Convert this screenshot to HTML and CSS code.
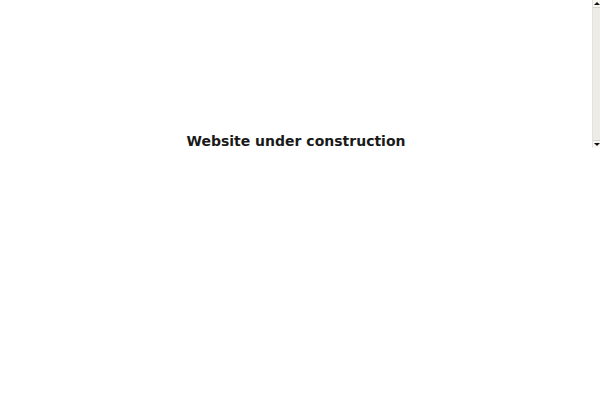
FILE: index.html
```html
<!DOCTYPE html>
<html>
<head>
<meta charset="utf-8">
<link rel="stylesheet" href="styles.css">
</head>
<body>
<div class="frame">
  <div class="content">
    <p class="notice">Website under construction</p>
  </div>
  <div class="scrollbar">
    <div class="btn up"></div>
    <div class="track"></div>
    <div class="btn down"></div>
  </div>
</div>
</body>
</html>
```
FILE: styles.css
```css
html, body {
  margin: 0;
  padding: 0;
  background: #ffffff;
}
.frame {
  display: flex;
  height: 148px;
}
.content {
  flex: 1;
  padding-top: 134px;
  box-sizing: border-box;
}
.notice {
  margin: 0;
  text-align: center;
  font-family: "DejaVu Sans", sans-serif;
  font-weight: bold;
  font-size: 14px;
  line-height: 14px;
  color: #1a1a1a;
}
.scrollbar {
  width: 7px;
  display: flex;
  flex-direction: column;
  background: #eeece6;
  border-left: 1px solid #e4e2dc;
}
.track {
  flex: 1;
}
.btn {
  height: 7px;
  background: #f7f6f3;
  display: flex;
  align-items: center;
  justify-content: center;
}
.btn.up {
  border-bottom: 1px solid #d6d4ce;
}
.btn.down {
  border-top: 1px solid #d6d4ce;
}
.btn::before {
  content: "";
  width: 0;
  height: 0;
  border-left: 3px solid transparent;
  border-right: 3px solid transparent;
}
.btn.up::before {
  border-bottom: 3px solid #111111;
}
.btn.down::before {
  border-top: 3px solid #111111;
}
```
